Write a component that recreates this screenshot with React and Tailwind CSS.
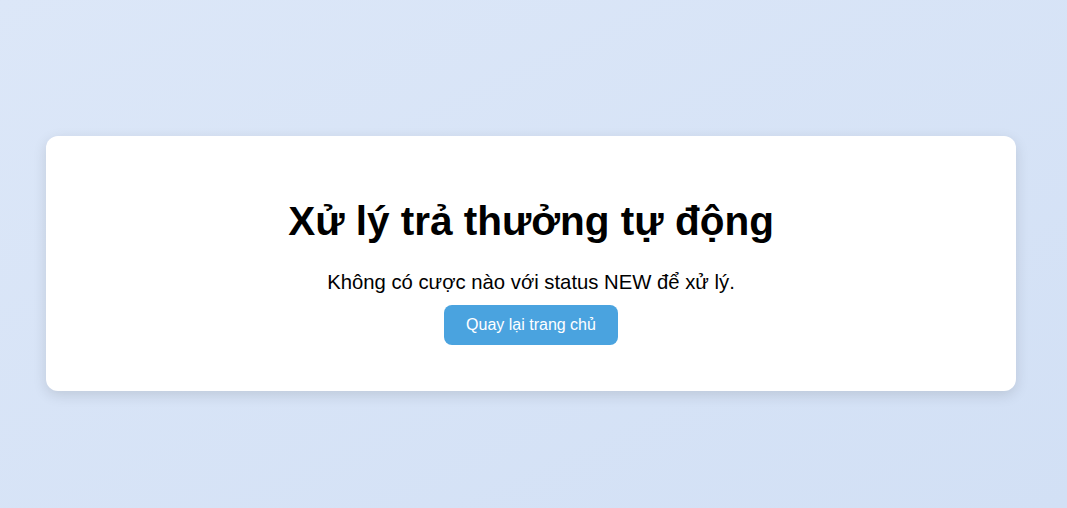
export default function App() {
  return (
    <div
      className="min-h-screen w-full bg-gradient-to-br from-[#dce7f8] to-[#d2e0f5] pt-[136px] pl-[46px]"
      style={{ fontFamily: '"Liberation Sans", Arial, sans-serif' }}
    >
      <div className="w-[970px] bg-white rounded-[12px] shadow-[0_4px_14px_rgba(0,0,0,0.12)] h-[255px] flex flex-col items-center pt-[62px]">
        <h1 className="text-[40.5px] leading-[46px] font-bold text-black">
          Xử lý trả thưởng tự động
        </h1>
        <p className="mt-[27px] text-[20.3px] leading-[23px] text-black">
          Không có cược nào với status NEW để xử lý.
        </p>
        <button className="mt-[11px] h-[40px] px-[22px] rounded-[8px] bg-[#4aa3df] text-white text-[16px]">
          Quay lại trang chủ
        </button>
      </div>
    </div>
  );
}
